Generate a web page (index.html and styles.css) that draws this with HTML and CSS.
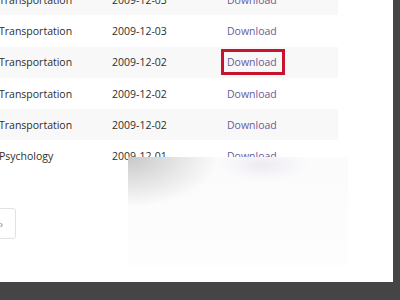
FILE: index.html
```html
<!DOCTYPE html>
<html>
<head>
<meta charset="utf-8">
<link rel="stylesheet" href="styles.css">
</head>
<body>
<div class="panel">
  <table class="list">
    <tr class="odd"><td>Transportation</td><td>2009-12-03</td><td><a class="dl">Download</a></td></tr>
    <tr><td>Transportation</td><td>2009-12-03</td><td><a class="dl">Download</a></td></tr>
    <tr class="odd"><td>Transportation</td><td>2009-12-02</td><td><a class="dl boxed">Download</a></td></tr>
    <tr><td>Transportation</td><td>2009-12-02</td><td><a class="dl">Download</a></td></tr>
    <tr class="odd"><td>Transportation</td><td>2009-12-02</td><td><a class="dl">Download</a></td></tr>
    <tr><td>Psychology</td><td>2009-12-01</td><td><a class="dl">Download</a></td></tr>
  </table>
  <div class="pager"><span class="pbtn">›</span></div>
  <div class="blur"></div>
</div>
</body>
</html>
```
FILE: styles.css
```css
html, body {
  margin: 0;
  padding: 0;
  background: #454545;
  overflow: hidden;
}
body {
  width: 400px;
  height: 300px;
  font-family: "Open Sans", "Liberation Sans", sans-serif;
}
.panel {
  position: relative;
  width: 393px;
  height: 282px;
  background: #fff;
  overflow: hidden;
}
.list {
  border-collapse: collapse;
  margin-top: -16px;
  margin-left: -1px;
  width: 339px;
  font-size: 10.5px;
  color: #2e2e2e;
}
.list tr {
  height: 31.3px;
}
.list tr.odd {
  background: #f8f8f8;
}
.list td {
  padding: 0;
  vertical-align: middle;
  white-space: nowrap;
}
.list td:nth-child(1) { width: 113px; }
.list td:nth-child(2) { width: 115px; }
.dl {
  color: #6a5a9a;
  text-decoration: none;
}
.boxed {
  display: inline-block;
  margin-left: -6px;
  padding: 2px 5px 2px 3px;
  border: 3px solid #c8132f;
  line-height: 16px;
}
.pager {
  display: flex;
  margin-top: 36px;
  margin-left: -13px;
}
.pbtn {
  width: 29px;
  height: 31px;
  box-sizing: border-box;
  border: 1px solid #e2e2e2;
  border-radius: 3px;
  display: flex;
  align-items: center;
  justify-content: center;
  color: #888;
  font-size: 11px;
}
.blur {
  position: absolute;
  left: 128px;
  top: 157px;
  width: 220px;
  height: 108px;
  background:
    radial-gradient(ellipse 45px 16px at 135px 8px, rgba(205,195,220,0.3), rgba(255,255,255,0)),
    radial-gradient(ellipse 90px 50px at 0 0, rgba(195,195,195,0.9), rgba(255,255,255,0) 100%),
    linear-gradient(180deg, #fbfbfb, #fdfdfd);
}
```
